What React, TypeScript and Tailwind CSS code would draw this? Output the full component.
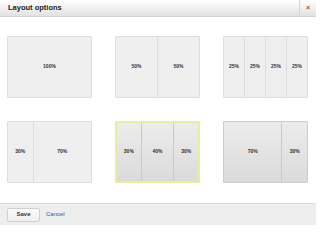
type Layout = { cols: number[]; selected?: boolean; shaded?: boolean };

const layouts: Layout[] = [
  { cols: [100] },
  { cols: [50, 50] },
  { cols: [25, 25, 25, 25] },
  { cols: [30, 70] },
  { cols: [30, 40, 30], selected: true, shaded: true },
  { cols: [70, 30], shaded: true },
];

function LayoutBox({ cols, selected, shaded }: Layout) {
  const frame = selected
    ? 'border-2 border-[#ececa0]'
    : shaded
      ? 'border border-[#cdcdcd]'
      : 'border border-[#dedede]';
  const fill = shaded
    ? 'bg-gradient-to-b from-[#ececec] to-[#dbdbdb]'
    : 'bg-[#efefef]';
  return (
    <div className={`flex h-[62px] w-[85px] rounded-[1px] ${frame} ${fill}`}>
      {cols.map((c, i) => (
        <div
          key={i}
          className={`flex items-center justify-center text-[5px] font-bold text-[#333] ${
            i > 0 ? (shaded ? 'border-l border-[#c9c9c9]' : 'border-l border-[#dcdcdc]') : ''
          }`}
          style={{ flexGrow: c, flexBasis: 0 }}
        >
          {c}%
        </div>
      ))}
    </div>
  );
}

export default function App() {
  return (
    <div className="flex h-[225px] w-[316px] flex-col bg-white font-['Liberation_Sans',Arial,sans-serif]">
      {/* Header */}
      <div className="flex h-[17px] items-stretch border-b border-[#d4d4d4] bg-gradient-to-b from-[#ffffff] to-[#e2e2e2]">
        <div className="flex flex-1 items-center pl-[8px] text-[7.5px] font-bold text-[#222]">
          Layout options
        </div>
        <div className="flex w-[17px] items-center justify-center border-l border-[#d6d6d6] text-[7px] font-bold text-[#666]">
          ×
        </div>
      </div>

      {/* Layout grid */}
      <div className="flex-1 pl-[7px] pt-[19px]">
        <div className="grid grid-cols-[85px_85px_85px] gap-x-[23px] gap-y-[23px]">
          {layouts.map((l, i) => (
            <LayoutBox key={i} {...l} />
          ))}
        </div>
      </div>

      {/* Footer */}
      <div className="flex h-[22px] items-center gap-[6px] border-t border-[#dadada] bg-[#eeeeee] pl-[7px]">
        <button className="h-[14px] w-[33px] rounded-[2px] border border-[#d0d0d0] bg-gradient-to-b from-[#fbfbfb] to-[#efefef] text-[6px] font-bold text-[#333]">
          Save
        </button>
        <span className="text-[6px] text-[#2a5db0]">Cancel</span>
      </div>
    </div>
  );
}
